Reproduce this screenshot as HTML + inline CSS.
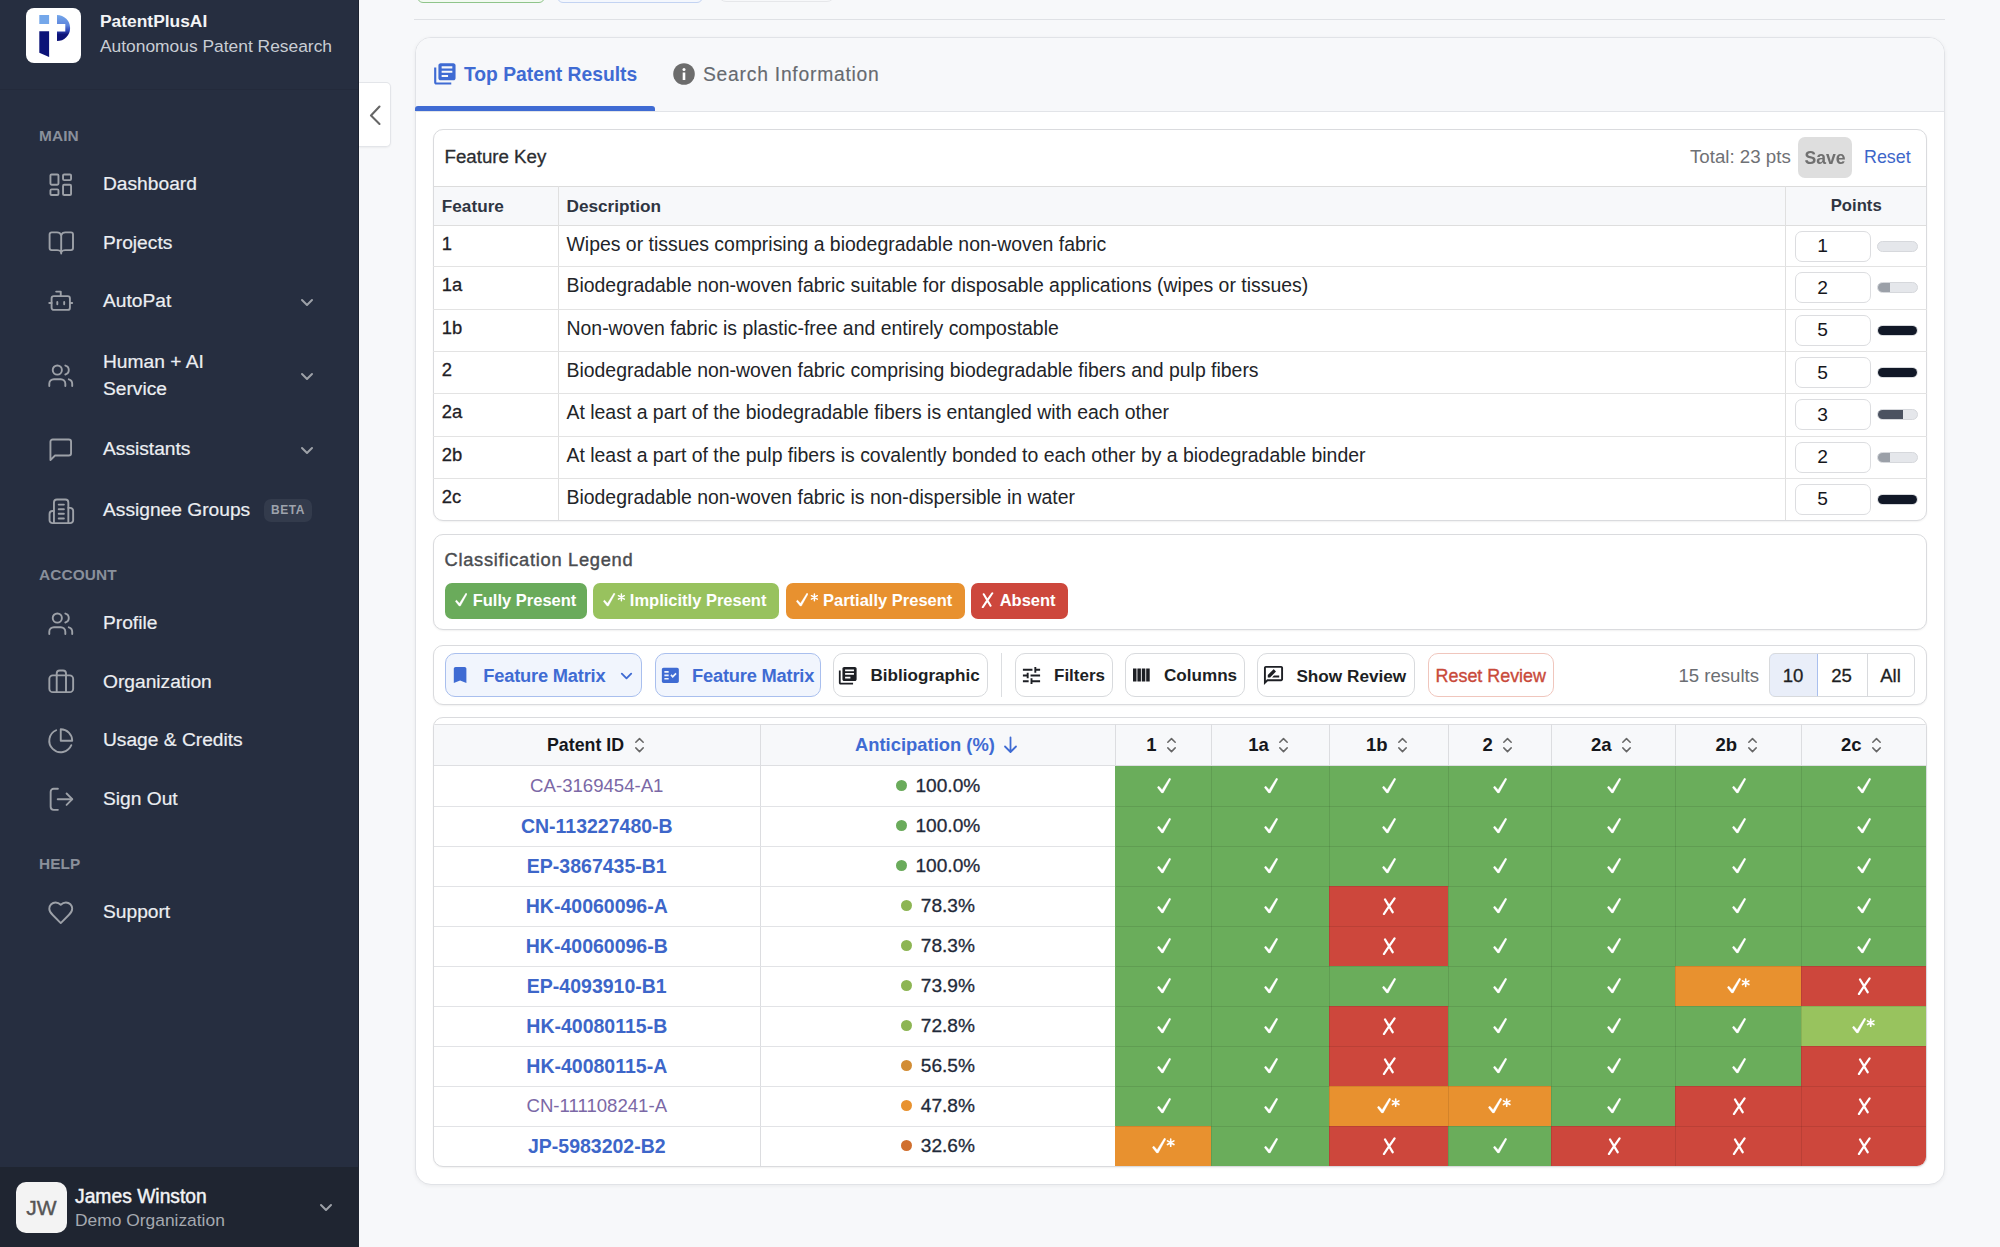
<!DOCTYPE html>
<html><head><meta charset="utf-8">
<style>
*{box-sizing:border-box;margin:0;padding:0}
html,body{width:2000px;height:1247px;overflow:hidden;background:#f7f8fa;font-family:"Liberation Sans",sans-serif;}
.abs{position:absolute}
.t{position:absolute;white-space:nowrap}
.box{position:absolute;border:1px solid #dadbde;border-radius:10px;background:#fff;box-shadow:0 1px 2px rgba(0,0,0,0.06)}
#sb{position:absolute;left:0;top:0;width:358.5px;height:1247px;background:#262e40;box-shadow:inset -1px 0 0 #1d2331}
.sbt{position:absolute;white-space:nowrap;color:#eceef2;font-size:19.2px;line-height:24px;-webkit-text-stroke:0.2px #eceef2}
.sec{position:absolute;white-space:nowrap;color:#8a909b;font-size:15.4px;font-weight:bold;line-height:20px;letter-spacing:0.1px}
.ic{position:absolute;width:27.5px;height:27.5px;fill:none;stroke:#9da1a8;stroke-width:1.65;stroke-linecap:round;stroke-linejoin:round}
.ic2{position:absolute;width:28px;height:28px;fill:none;stroke:#9da1a8;stroke-width:1.9;stroke-linecap:round;stroke-linejoin:round}
.chev{position:absolute;width:16px;height:16px;fill:none;stroke:#9da1a8;stroke-width:2;stroke-linecap:round;stroke-linejoin:round}
</style></head><body>
<div id="sb">
  <!-- logo -->
  <div class="abs" style="left:26px;top:8px;width:55px;height:55px;background:#fff;border-radius:8px"></div>
  <svg class="abs" style="left:26px;top:8px" width="55" height="55" viewBox="0 0 55 55">
    <defs><linearGradient id="lg" x1="0" y1="0" x2="0" y2="1"><stop offset="0" stop-color="#74a7ea"/><stop offset="0.4" stop-color="#5e84dc"/><stop offset="0.6" stop-color="#3047b8"/><stop offset="0.75" stop-color="#0e147a"/><stop offset="1" stop-color="#0c1278"/></linearGradient></defs>
    <rect x="13.3" y="7" width="9.8" height="9" fill="#74a7ea"/>
    <path d="M13.3 23.3 H23.1 V48.9 L13.3 44.8 Z" fill="#0c1378"/>
    <path d="M31 6.9 A13 13 0 0 1 31 33.1 V23.5 H39.3 V16 H31 Z" fill="url(#lg)"/>
  </svg>
  <div class="abs" style="left:100px;top:9px;color:#f3f4f6;font-size:17.4px;font-weight:bold;line-height:24px;white-space:nowrap">PatentPlusAI</div>
  <div class="abs" style="left:100px;top:34px;color:#c9cdd4;font-size:17.4px;line-height:24px;white-space:nowrap">Autonomous Patent Research</div>
  <div class="abs" style="left:0;top:88.5px;width:358px;height:1px;background:#232a3b"></div>

  <div class="sec" style="left:39px;top:126px">MAIN</div>

  <svg class="ic" style="left:47.25px;top:171.25px" viewBox="0 0 24 24"><rect x="3" y="3" width="7" height="9" rx="1"/><rect x="14" y="3" width="7" height="5" rx="1"/><rect x="14" y="12" width="7" height="9" rx="1"/><rect x="3" y="16" width="7" height="5" rx="1"/></svg>
  <div class="sbt" style="left:103px;top:172px">Dashboard</div>

  <svg class="ic2" style="left:47px;top:228px" viewBox="0 0 28 28"><path d="M14.2 25.6V7.2C13.5 5.3 12 4.4 10 4.4H4.6a2 2 0 0 0-2 2V20.1a2 2 0 0 0 2 2H10c2 0 3.5.6 4.2 2"/><path d="M14.2 7.2C14.9 5.3 16.4 4.4 18.4 4.4H24a2 2 0 0 1 2 2V20.1a2 2 0 0 1-2 2H18.4c-2 0-3.5.6-4.2 2"/></svg>
  <div class="sbt" style="left:103px;top:231px">Projects</div>

  <svg class="ic" style="left:47.25px;top:287.25px" viewBox="0 0 24 24"><path d="M12 8V4H8"/><rect width="16" height="12" x="4" y="8" rx="2"/><path d="M2 14h2"/><path d="M20 14h2"/><path d="M15 13v2"/><path d="M9 13v2"/></svg>
  <div class="sbt" style="left:103px;top:289px">AutoPat</div>
  <svg class="chev" style="left:299px;top:294px" viewBox="0 0 16 16"><path d="M3 6l5 5 5-5"/></svg>

  <svg class="ic" style="left:47.25px;top:362.25px" viewBox="0 0 24 24"><path d="M16 21v-2a4 4 0 0 0-4-4H6a4 4 0 0 0-4 4v2"/><circle cx="9" cy="7" r="4"/><path d="M22 21v-2a4 4 0 0 0-3-3.87"/><path d="M16 3.13a4 4 0 0 1 0 7.75"/></svg>
  <div class="sbt" style="left:103px;top:350px">Human + AI</div>
  <div class="sbt" style="left:103px;top:377px">Service</div>
  <svg class="chev" style="left:299px;top:368px" viewBox="0 0 16 16"><path d="M3 6l5 5 5-5"/></svg>

  <svg class="ic" style="left:47.25px;top:436.25px" viewBox="0 0 24 24"><path d="M21 15a2 2 0 0 1-2 2H7l-4 4V5a2 2 0 0 1 2-2h14a2 2 0 0 1 2 2z"/></svg>
  <div class="sbt" style="left:103px;top:437px">Assistants</div>
  <svg class="chev" style="left:299px;top:442px" viewBox="0 0 16 16"><path d="M3 6l5 5 5-5"/></svg>

  <svg class="ic2" style="left:47px;top:497px" viewBox="0 0 28 28"><path d="M6.95 26.15V5.55a3 3 0 0 1 3-3h8.4a3 3 0 0 1 3 3V26.15"/><path d="M6.95 14.05H5.55a3 3 0 0 0-3 3V23.15a3 3 0 0 0 3 3H23.15a3 3 0 0 0 3-3V13.85a3 3 0 0 0-3-3H21.35"/><path d="M11.7 7.6h5.2M11.7 12.2h5.2M11.7 16.7h5.2M11.7 21.5h5.2"/></svg>
  <div class="sbt" style="left:103px;top:498px">Assignee Groups</div>
  <div class="abs" style="left:264px;top:499px;width:48px;height:23px;border-radius:7px;background:#333b4c;color:#9ea3ac;font-size:12px;font-weight:bold;line-height:23px;text-align:center;letter-spacing:0.6px">BETA</div>

  <div class="sec" style="left:39px;top:565px">ACCOUNT</div>

  <svg class="ic" style="left:47.25px;top:610.25px" viewBox="0 0 24 24"><path d="M16 21v-2a4 4 0 0 0-4-4H6a4 4 0 0 0-4 4v2"/><circle cx="9" cy="7" r="4"/><path d="M22 21v-2a4 4 0 0 0-3-3.87"/><path d="M16 3.13a4 4 0 0 1 0 7.75"/></svg>
  <div class="sbt" style="left:103px;top:611px">Profile</div>

  <svg class="ic2" style="left:47px;top:666px" viewBox="0 0 28 28"><rect x="2.35" y="9.35" width="23.8" height="16.8" rx="3.5"/><path d="M9.7 9.35V7.55a3 3 0 0 1 3-3h3.3a3 3 0 0 1 3 3V9.35"/><path d="M9.7 9.35V26.15M19 9.35V26.15"/></svg>
  <div class="sbt" style="left:103px;top:670px">Organization</div>

  <svg class="ic" style="left:47.25px;top:727.25px" viewBox="0 0 24 24"><path d="M21.21 15.89A10 10 0 1 1 8 2.83"/><path d="M22 12A10 10 0 0 0 12 2v10z"/></svg>
  <div class="sbt" style="left:103px;top:728px">Usage &amp; Credits</div>

  <svg class="ic2" style="left:47px;top:786px" viewBox="0 0 28 28"><path d="M10.9 2.75H6.65A3 3 0 0 0 3.65 5.75V20.85A3 3 0 0 0 6.65 23.85H10.9"/><path d="M10.7 13.2H25"/><path d="M19.6 7.5L25.3 13.2L19.6 18.9"/></svg>
  <div class="sbt" style="left:103px;top:787px">Sign Out</div>

  <div class="sec" style="left:39px;top:854px">HELP</div>

  <svg class="ic" style="left:47.25px;top:899.25px" viewBox="0 0 24 24"><path d="M19 14c1.49-1.46 3-3.21 3-5.5A5.5 5.5 0 0 0 16.5 3c-1.76 0-3 .5-4.5 2-1.5-1.5-2.74-2-4.5-2A5.5 5.5 0 0 0 2 8.5c0 2.3 1.5 4.05 3 5.5l7 7Z"/></svg>
  <div class="sbt" style="left:103px;top:900px">Support</div>

  <!-- footer -->
  <div class="abs" style="left:0;top:1167px;width:358.5px;height:80px;background:#1f2531"></div>
  <div class="abs" style="left:16px;top:1182px;width:51px;height:51px;border-radius:10px;background:#f3f3f3;color:#555;font-size:21px;line-height:51px;text-align:center;-webkit-text-stroke:0.4px #555">JW</div>
  <div class="abs" style="left:75px;top:1184.5px;color:#f3f4f6;font-size:19.3px;line-height:24px;white-space:nowrap;-webkit-text-stroke:0.45px #f3f4f6">James Winston</div>
  <div class="abs" style="left:75px;top:1208px;color:#a5a9b0;font-size:17.4px;line-height:24px;white-space:nowrap">Demo Organization</div>
  <svg class="chev" style="left:318px;top:1199px" viewBox="0 0 16 16"><path d="M3 6l5 5 5-5"/></svg>
</div>

<!-- collapse button -->
<div class="abs" style="left:358.5px;top:81.8px;width:32px;height:65.7px;background:#fff;border:1px solid #e3e5e9;border-left:none;border-radius:0 5px 5px 0;box-shadow:0 1px 2px rgba(0,0,0,0.05)"></div>
<svg class="abs" style="left:364px;top:103px" width="22" height="24" viewBox="0 0 22 24"><path d="M15.5 3.5L7 12.5l8.5 8.5" fill="none" stroke="#666" stroke-width="2.1" stroke-linecap="round" stroke-linejoin="round"/></svg>


<!-- MAIN -->
<div class="abs" style="left:416.5px;top:-40px;width:128px;height:42.5px;border:1.5px solid #8fc48a;border-radius:6px;background:#f3faf2"></div>
<div class="abs" style="left:557px;top:-40px;width:146px;height:42.5px;border:1.5px solid #c3d3f2;border-radius:6px;background:#f4f7fd"></div>
<div class="abs" style="left:718px;top:-40px;width:117px;height:42px;border:1px solid #e6e7ea;border-radius:8px;background:#f7f8fa"></div>
<div class="abs" style="left:414px;top:19px;width:1531px;height:1px;background:#dfe1e5"></div>

<div id="card" class="abs" style="left:414.5px;top:37px;width:1530px;height:1148px;background:#fff;border:1px solid #e1e3e7;border-radius:16px;box-shadow:0 1px 4px rgba(0,0,0,0.06);overflow:hidden">
  <div class="abs" style="left:0;top:0;width:1530px;height:74px;background:#f7f8fa;border-bottom:1px solid #e2e4e8"></div>
</div>
<div class="abs" style="left:415px;top:106px;width:240px;height:4.5px;background:#3f6bd3;border-radius:3px 3px 0 0"></div>
<svg class="abs" style="left:431.9px;top:61.1px" width="25.7" height="25.7" viewBox="0 0 24 24"><path fill="#3f6bd3" d="M4 6H2v14c0 1.1.9 2 2 2h14v-2H4V6zm16-4H8c-1.1 0-2 .9-2 2v12c0 1.1.9 2 2 2h12c1.1 0 2-.9 2-2V4c0-1.1-.9-2-2-2zm-1 9H9V9h10v2zm-4 4H9v-2h6v2zm4-8H9V5h10v2z"/></svg>
<div class="t" style="left:464px;top:63px;font-size:19.3px;font-weight:bold;color:#3f6bd3;line-height:24px">Top Patent Results</div>
<svg class="abs" style="left:672.5px;top:63px" width="22" height="22" viewBox="0 0 22 22"><circle cx="11" cy="11" r="10.8" fill="#6c6c6c"/><rect x="9.7" y="9.5" width="2.6" height="7.5" fill="#fff"/><circle cx="11" cy="6.6" r="1.5" fill="#fff"/></svg>
<div class="t" style="left:703px;top:62.5px;font-size:19.3px;letter-spacing:0.76px;color:#666a70;line-height:24px;-webkit-text-stroke:0.15px #666a70">Search Information</div>

<!-- feature key -->
<div class="box" style="left:432.5px;top:128.5px;width:1494.5px;height:392px;"></div>
<div class="t" style="left:444.5px;top:144.5px;font-size:18.7px;color:#2b2d31;line-height:24px;-webkit-text-stroke:0.3px #2b2d31">Feature Key</div>
<div class="t" style="left:1690px;top:144.5px;font-size:18.7px;color:#6f7175;line-height:24px">Total: 23 pts</div>
<div class="abs" style="left:1797.5px;top:137px;width:54.5px;height:41px;border-radius:7px;background:#dedede"></div>
<div class="t" style="left:1804.5px;top:145.5px;font-size:17.6px;font-weight:bold;color:#707070;line-height:24px;filter:blur(0.4px)">Save</div>
<div class="t" style="left:1864px;top:145px;font-size:17.9px;color:#3d66c9;line-height:24px">Reset</div>
<div class="abs" style="left:433.5px;top:185.5px;width:1492.5px;height:40px;background:#f7f8fa;border-top:1.5px solid #dcdcdc;border-bottom:1px solid #dedede"></div>
<div class="t" style="left:441.8px;top:194px;font-size:17.2px;font-weight:bold;color:#2f3542;line-height:24px">Feature</div>
<div class="t" style="left:566.5px;top:194px;font-size:17.2px;font-weight:bold;color:#2f3542;line-height:24px">Description</div>
<div class="t" style="left:1785.7px;top:194px;width:141px;text-align:center;font-size:16.7px;font-weight:bold;color:#2f3542;line-height:24px">Points</div>
<div class="abs" style="left:557.8px;top:186px;width:1px;height:334px;background:#e0e0e0"></div>
<div class="abs" style="left:1785.2px;top:186px;width:1px;height:334px;background:#e0e0e0"></div>
<div class="abs" style="left:433px;top:266.2px;width:1493.5px;height:1px;background:#e3e3e3"></div>
<div class="t" style="left:441.8px;top:231.6px;font-size:18.4px;color:#1f2126;line-height:24px;-webkit-text-stroke:0.3px #1f2126">1</div>
<div class="t" style="left:566.5px;top:231.6px;font-size:19.43px;color:#222428;line-height:24px">Wipes or tissues comprising a biodegradable non-woven fabric</div>
<div class="abs" style="left:1794.5px;top:230.6px;width:76px;height:31px;border:1px solid #dcdde0;border-radius:7px;background:#fff"></div>
<div class="t" style="left:1794.5px;top:234.1px;width:56px;text-align:center;font-size:19.2px;color:#15171c;line-height:24px">1</div>
<div class="abs" style="left:1877px;top:240.6px;width:41px;height:11px;border-radius:6px;background:#e5e7eb;border:0.5px solid #d6d8dc;overflow:hidden"><div style="width:0%;height:100%;background:#9ba0a8"></div></div>
<div class="abs" style="left:433px;top:308.5px;width:1493.5px;height:1px;background:#e3e3e3"></div>
<div class="t" style="left:441.8px;top:273.4px;font-size:18.4px;color:#1f2126;line-height:24px;-webkit-text-stroke:0.3px #1f2126">1a</div>
<div class="t" style="left:566.5px;top:273.4px;font-size:19.43px;color:#222428;line-height:24px">Biodegradable non-woven fabric suitable for disposable applications (wipes or tissues)</div>
<div class="abs" style="left:1794.5px;top:272.4px;width:76px;height:31px;border:1px solid #dcdde0;border-radius:7px;background:#fff"></div>
<div class="t" style="left:1794.5px;top:275.9px;width:56px;text-align:center;font-size:19.2px;color:#15171c;line-height:24px">2</div>
<div class="abs" style="left:1877px;top:282.4px;width:41px;height:11px;border-radius:6px;background:#e5e7eb;border:0.5px solid #d6d8dc;overflow:hidden"><div style="width:32%;height:100%;background:#9ba0a8"></div></div>
<div class="abs" style="left:433px;top:350.9px;width:1493.5px;height:1px;background:#e3e3e3"></div>
<div class="t" style="left:441.8px;top:315.7px;font-size:18.4px;color:#1f2126;line-height:24px;-webkit-text-stroke:0.3px #1f2126">1b</div>
<div class="t" style="left:566.5px;top:315.7px;font-size:19.43px;color:#222428;line-height:24px">Non-woven fabric is plastic-free and entirely compostable</div>
<div class="abs" style="left:1794.5px;top:314.7px;width:76px;height:31px;border:1px solid #dcdde0;border-radius:7px;background:#fff"></div>
<div class="t" style="left:1794.5px;top:318.2px;width:56px;text-align:center;font-size:19.2px;color:#15171c;line-height:24px">5</div>
<div class="abs" style="left:1877px;top:324.7px;width:41px;height:11px;border-radius:6px;background:#e5e7eb;border:0.5px solid #d6d8dc;overflow:hidden"><div style="width:100%;height:100%;background:#111827"></div></div>
<div class="abs" style="left:433px;top:393.2px;width:1493.5px;height:1px;background:#e3e3e3"></div>
<div class="t" style="left:441.8px;top:358.0px;font-size:18.4px;color:#1f2126;line-height:24px;-webkit-text-stroke:0.3px #1f2126">2</div>
<div class="t" style="left:566.5px;top:358.0px;font-size:19.43px;color:#222428;line-height:24px">Biodegradable non-woven fabric comprising biodegradable fibers and pulp fibers</div>
<div class="abs" style="left:1794.5px;top:357.0px;width:76px;height:31px;border:1px solid #dcdde0;border-radius:7px;background:#fff"></div>
<div class="t" style="left:1794.5px;top:360.5px;width:56px;text-align:center;font-size:19.2px;color:#15171c;line-height:24px">5</div>
<div class="abs" style="left:1877px;top:367.0px;width:41px;height:11px;border-radius:6px;background:#e5e7eb;border:0.5px solid #d6d8dc;overflow:hidden"><div style="width:100%;height:100%;background:#111827"></div></div>
<div class="abs" style="left:433px;top:435.5px;width:1493.5px;height:1px;background:#e3e3e3"></div>
<div class="t" style="left:441.8px;top:400.4px;font-size:18.4px;color:#1f2126;line-height:24px;-webkit-text-stroke:0.3px #1f2126">2a</div>
<div class="t" style="left:566.5px;top:400.4px;font-size:19.43px;color:#222428;line-height:24px">At least a part of the biodegradable fibers is entangled with each other</div>
<div class="abs" style="left:1794.5px;top:399.4px;width:76px;height:31px;border:1px solid #dcdde0;border-radius:7px;background:#fff"></div>
<div class="t" style="left:1794.5px;top:402.9px;width:56px;text-align:center;font-size:19.2px;color:#15171c;line-height:24px">3</div>
<div class="abs" style="left:1877px;top:409.4px;width:41px;height:11px;border-radius:6px;background:#e5e7eb;border:0.5px solid #d6d8dc;overflow:hidden"><div style="width:64%;height:100%;background:#4b5260"></div></div>
<div class="abs" style="left:433px;top:477.5px;width:1493.5px;height:1px;background:#e3e3e3"></div>
<div class="t" style="left:441.8px;top:442.5px;font-size:18.4px;color:#1f2126;line-height:24px;-webkit-text-stroke:0.3px #1f2126">2b</div>
<div class="t" style="left:566.5px;top:442.5px;font-size:19.43px;color:#222428;line-height:24px">At least a part of the pulp fibers is covalently bonded to each other by a biodegradable binder</div>
<div class="abs" style="left:1794.5px;top:441.5px;width:76px;height:31px;border:1px solid #dcdde0;border-radius:7px;background:#fff"></div>
<div class="t" style="left:1794.5px;top:445.0px;width:56px;text-align:center;font-size:19.2px;color:#15171c;line-height:24px">2</div>
<div class="abs" style="left:1877px;top:451.5px;width:41px;height:11px;border-radius:6px;background:#e5e7eb;border:0.5px solid #d6d8dc;overflow:hidden"><div style="width:32%;height:100%;background:#9ba0a8"></div></div>
<div class="t" style="left:441.8px;top:484.7px;font-size:18.4px;color:#1f2126;line-height:24px;-webkit-text-stroke:0.3px #1f2126">2c</div>
<div class="t" style="left:566.5px;top:484.7px;font-size:19.43px;color:#222428;line-height:24px">Biodegradable non-woven fabric is non-dispersible in water</div>
<div class="abs" style="left:1794.5px;top:483.8px;width:76px;height:31px;border:1px solid #dcdde0;border-radius:7px;background:#fff"></div>
<div class="t" style="left:1794.5px;top:487.2px;width:56px;text-align:center;font-size:19.2px;color:#15171c;line-height:24px">5</div>
<div class="abs" style="left:1877px;top:493.8px;width:41px;height:11px;border-radius:6px;background:#e5e7eb;border:0.5px solid #d6d8dc;overflow:hidden"><div style="width:100%;height:100%;background:#111827"></div></div>
<!-- LEGEND_START -->
<div class="box" style="left:432.5px;top:534.3px;width:1494.5px;height:95.5px;"></div>
<div class="t" style="left:444.5px;top:547.8px;font-size:18.3px;letter-spacing:0.72px;color:#4a4c50;line-height:24px;-webkit-text-stroke:0.4px #4a4c50">Classification Legend</div>
<div class="abs" style="left:444.5px;top:583px;width:142.1px;height:35.6px;border-radius:7px;background:#6aab5b"></div>
<svg class="abs" style="left:455.2px;top:593px" width="12.3" height="14.1" viewBox="0 0 14 16"><path d="M0.3 9.4 L1.7 8.0 L5.1 11.7 L12.4 0.1 L13.9 0.9 L6.2 14.9 L4.6 14.9 Z" fill="#fff" stroke="#fff" stroke-width="0.3" stroke-linejoin="round"/></svg>
<div class="t" style="left:472.7px;top:588px;font-size:16.5px;font-weight:bold;color:#fff;line-height:24px">Fully Present</div>
<div class="abs" style="left:592.7px;top:583px;width:186.7px;height:35.6px;border-radius:7px;background:#98c25e"></div>
<svg class="abs" style="left:603.4000000000001px;top:593px" width="12.3" height="14.1" viewBox="0 0 14 16"><path d="M0.3 9.4 L1.7 8.0 L5.1 11.7 L12.4 0.1 L13.9 0.9 L6.2 14.9 L4.6 14.9 Z" fill="#fff" stroke="#fff" stroke-width="0.3" stroke-linejoin="round"/></svg>
<svg class="abs" style="left:616.7px;top:593.1px" width="8.8" height="8.8" viewBox="0 0 8.80 8.80"><path d="M4.40 1.00L4.40 7.80M1.46 2.70L7.34 6.10M7.34 2.70L1.46 6.10" stroke="#fff" stroke-width="1.5" stroke-linecap="round" fill="none"/></svg>
<div class="t" style="left:629.8px;top:588px;font-size:16.5px;font-weight:bold;color:#fff;line-height:24px">Implicitly Present</div>
<div class="abs" style="left:785.5px;top:583px;width:179.5px;height:35.6px;border-radius:7px;background:#e8912f"></div>
<svg class="abs" style="left:796.2px;top:593px" width="12.3" height="14.1" viewBox="0 0 14 16"><path d="M0.3 9.4 L1.7 8.0 L5.1 11.7 L12.4 0.1 L13.9 0.9 L6.2 14.9 L4.6 14.9 Z" fill="#fff" stroke="#fff" stroke-width="0.3" stroke-linejoin="round"/></svg>
<svg class="abs" style="left:809.5px;top:593.1px" width="8.8" height="8.8" viewBox="0 0 8.80 8.80"><path d="M4.40 1.00L4.40 7.80M1.46 2.70L7.34 6.10M7.34 2.70L1.46 6.10" stroke="#fff" stroke-width="1.5" stroke-linecap="round" fill="none"/></svg>
<div class="t" style="left:823px;top:588px;font-size:16.5px;font-weight:bold;color:#fff;line-height:24px">Partially Present</div>
<div class="abs" style="left:970.8px;top:583px;width:96.9px;height:35.6px;border-radius:7px;background:#cd473c"></div>
<svg class="abs" style="left:981.0999999999999px;top:592px" width="12.6" height="16.2" viewBox="0 0 14 18"><path d="M3.05 2.5 L10.65 15.2 M12.55 1.4 C9 6.5 5 12 1.95 17.0" fill="none" stroke="#fff" stroke-width="2.3" stroke-linecap="round" stroke-linejoin="round"/></svg>
<div class="t" style="left:999.7px;top:588px;font-size:16.5px;font-weight:bold;color:#fff;line-height:24px">Absent</div>
<div class="box" style="left:432.5px;top:645px;width:1494.5px;height:60.3px;"></div>
<div class="abs" style="left:444.8px;top:653.3px;width:197.6px;height:43.6px;border-radius:10px;background:#f1f5fd;border:1px solid #a9bfee"></div>
<svg class="abs" style="left:451.8px;top:666.1px" width="16.2" height="18" viewBox="3 2 18 20"><path fill="#3f6bd3" d="M17 3H7c-1.1 0-2 .9-2 2v16l7-3 7 3V5c0-1.1-.9-2-2-2z"/></svg>
<div class="t" style="left:483.3px;top:663.7px;font-size:18.3px;font-weight:bold;color:#3f6bd3;line-height:24px;letter-spacing:-0.2px">Feature Matrix</div>
<svg class="abs" style="left:619px;top:668px" width="15" height="15" viewBox="0 0 16 16"><path d="M3 6l5 5 5-5" fill="none" stroke="#3f6bd3" stroke-width="2" stroke-linecap="round" stroke-linejoin="round"/></svg>
<div class="abs" style="left:654.5px;top:653.3px;width:166.1px;height:43.6px;border-radius:10px;background:#f1f5fd;border:1px solid #a9bfee"></div>
<svg class="abs" style="left:660.9px;top:665.9px" width="18.7" height="18.7" viewBox="1 1 22 22"><path fill="#3f6bd3" d="M20 3H4c-1.1 0-2 .9-2 2v14c0 1.1.9 2 2 2h16c1.1 0 2-.9 2-2V5c0-1.1-.9-2-2-2zM10 17H5v-2h5v2zm0-4H5v-2h5v2zm0-4H5V7h5v2zm4.82 6L12 12.16l1.41-1.41 1.41 1.42L17.99 9l1.42 1.42L14.82 15z"/></svg>
<div class="t" style="left:692px;top:663.7px;font-size:18.3px;font-weight:bold;color:#3f6bd3;line-height:24px;letter-spacing:-0.2px">Feature Matrix</div>
<div class="abs" style="left:833.4px;top:653.3px;width:154.4px;height:43.6px;border-radius:10px;background:#fff;border:1px solid #d8dadd"></div>
<svg class="abs" style="left:838.4px;top:665.6px" width="19.5" height="19.5" viewBox="1 1 22 22"><path fill="#1d1f24" d="M4 6H2v14c0 1.1.9 2 2 2h14v-2H4V6zm16-4H8c-1.1 0-2 .9-2 2v12c0 1.1.9 2 2 2h12c1.1 0 2-.9 2-2V4c0-1.1-.9-2-2-2zm-1 9H9V9h10v2zm-4 4H9v-2h6v2zm4-8H9V5h10v2z"/></svg>
<div class="t" style="left:870.5px;top:663.7px;font-size:17.1px;font-weight:bold;color:#1d1f24;line-height:24px">Bibliographic</div>
<div class="abs" style="left:1001px;top:653px;width:1px;height:44px;background:#dcdee1"></div>
<div class="abs" style="left:1015px;top:653.3px;width:98.0px;height:43.6px;border-radius:10px;background:#fff;border:1px solid #d8dadd"></div>
<svg class="abs" style="left:1021px;top:665px" width="21" height="21" viewBox="1 1 22 22"><path fill="#1d1f24" d="M3 17v2h6v-2H3zM3 5v2h10V5H3zm10 16v-2h8v-2h-8v-2h-2v6h2zM7 9v2H3v2h4v2h2V9H7zm14 4v-2H11v2h10zm-6-4h2V7h4V5h-4V3h-2v6z"/></svg>
<div class="t" style="left:1054px;top:663.7px;font-size:17px;font-weight:bold;color:#1d1f24;line-height:24px">Filters</div>
<div class="abs" style="left:1125.4px;top:653.3px;width:120.0px;height:43.6px;border-radius:10px;background:#fff;border:1px solid #d8dadd"></div>
<svg class="abs" style="left:1133px;top:667px" width="17" height="16" viewBox="0 0 17 16"><rect x="0" y="1.5" width="3.5" height="13" fill="#1d1f24"/><rect x="4.4" y="1.5" width="3.5" height="13" fill="#1d1f24"/><rect x="8.8" y="1.5" width="3.5" height="13" fill="#1d1f24"/><rect x="13.2" y="1.5" width="3.5" height="13" fill="#1d1f24"/></svg>
<div class="t" style="left:1164px;top:663.7px;font-size:17.1px;font-weight:bold;color:#1d1f24;line-height:24px">Columns</div>
<div class="abs" style="left:1257.4px;top:653.3px;width:157.2px;height:43.6px;border-radius:10px;background:#fff;border:1px solid #d8dadd"></div>
<svg class="abs" style="left:1263px;top:665px" width="21" height="21" viewBox="1 1 22 22"><path fill="#1d1f24" d="M20 2H4c-1.1 0-1.99.9-1.99 2L2 22l4-4h14c1.1 0 2-.9 2-2V4c0-1.1-.9-2-2-2zm0 14H5.17l-.59.59-.58.58V4h16v12zm-9.5-2H18v-2h-5.5zm3.86-5.87c.2-.2.2-.51 0-.71l-1.77-1.77c-.2-.2-.51-.2-.71 0L6 11.53V14h2.47l5.89-5.87z"/></svg>
<div class="t" style="left:1296.4px;top:663.7px;font-size:17.2px;font-weight:bold;color:#1d1f24;line-height:24px">Show Review</div>
<div class="abs" style="left:1427.5px;top:653.3px;width:126.9px;height:43.6px;border-radius:10px;background:#fff;border:1px solid #f0c6bd"></div>
<div class="t" style="left:1435.6px;top:663.7px;font-size:17.9px;color:#c94a3a;line-height:24px;-webkit-text-stroke:0.35px #c94a3a">Reset Review</div>
<div class="t" style="left:1678.4px;top:663.7px;font-size:18.6px;color:#6b6e73;line-height:24px">15 results</div>
<div class="abs" style="left:1768.6px;top:653.3px;width:146.4px;height:43.6px;border-radius:6px;border:1px solid #d8dadd;background:#fff;overflow:hidden"><div class="abs" style="left:-1px;top:-1px;width:49.4px;height:43.6px;background:#e9eef9;border:1px solid #a9bfee;border-radius:6px 0 0 6px"></div><div class="abs" style="left:97.4px;top:0;width:1px;height:43px;background:#d8dadd"></div></div>
<div class="t" style="left:1768.6px;top:663.7px;width:49px;text-align:center;font-size:18.6px;color:#1d1f24;line-height:24px;-webkit-text-stroke:0.3px #1d1f24">10</div>
<div class="t" style="left:1817px;top:663.7px;width:49px;text-align:center;font-size:18.6px;color:#1d1f24;line-height:24px;-webkit-text-stroke:0.3px #1d1f24">25</div>
<div class="t" style="left:1866px;top:663.7px;width:49px;text-align:center;font-size:18.6px;color:#1d1f24;line-height:24px;-webkit-text-stroke:0.3px #1d1f24">All</div>
<div class="box" style="left:432.5px;top:717.4px;width:1494px;height:449.5px;border-radius:10px;overflow:hidden"></div>
<div class="abs" style="left:433.5px;top:718.4px;width:1492px;height:447.5px;border-radius:9px;overflow:hidden"><div class="abs" style="left:-433.5px;top:-718.4px;width:2000px;height:1247px">
<div class="abs" style="left:433.5px;top:724px;width:1492px;height:42.3px;background:#f7f8fa;border-top:1px solid #dedfe2;border-bottom:1px solid #dedfe2"></div>
<div class="abs" style="left:433.2px;top:732.6px;width:325.2px;height:24px;display:flex;justify-content:center;align-items:center;white-space:nowrap"><span style="font-size:17.8px;font-weight:bold;color:#15171c;line-height:24px">Patent ID</span><svg width="11" height="18" viewBox="0 0 11 18" style="margin-left:9.5px;flex:none"><path d="M1.8 6.3L5.5 2.6L9.2 6.3M1.8 11.9L5.5 15.6L9.2 11.9" fill="none" stroke="#666" stroke-width="1.5" stroke-linecap="round" stroke-linejoin="round"/></svg></div>
<div class="abs" style="left:760.4px;top:732.6px;width:353.1px;height:24px;display:flex;justify-content:center;align-items:center;white-space:nowrap"><span style="font-size:18.4px;font-weight:bold;color:#3f6bd3;line-height:24px">Anticipation (%)</span><svg width="17" height="19" viewBox="0 0 17 19" style="margin-left:7px;flex:none"><path d="M8.5 2.5v14M3 11.5l5.5 5.5 5.5-5.5" fill="none" stroke="#3f6bd3" stroke-width="1.8" stroke-linecap="round" stroke-linejoin="round"/></svg></div>
<div class="abs" style="left:1115.5px;top:732.6px;width:92.4px;height:24px;display:flex;justify-content:center;align-items:center;white-space:nowrap"><span style="font-size:18.5px;font-weight:bold;color:#15171c;line-height:24px">1</span><svg width="11" height="18" viewBox="0 0 11 18" style="margin-left:9.5px;flex:none"><path d="M1.8 6.3L5.5 2.6L9.2 6.3M1.8 11.9L5.5 15.6L9.2 11.9" fill="none" stroke="#666" stroke-width="1.5" stroke-linecap="round" stroke-linejoin="round"/></svg></div>
<div class="abs" style="left:1211.9px;top:732.6px;width:113.6px;height:24px;display:flex;justify-content:center;align-items:center;white-space:nowrap"><span style="font-size:18.5px;font-weight:bold;color:#15171c;line-height:24px">1a</span><svg width="11" height="18" viewBox="0 0 11 18" style="margin-left:9.5px;flex:none"><path d="M1.8 6.3L5.5 2.6L9.2 6.3M1.8 11.9L5.5 15.6L9.2 11.9" fill="none" stroke="#666" stroke-width="1.5" stroke-linecap="round" stroke-linejoin="round"/></svg></div>
<div class="abs" style="left:1329.5px;top:732.6px;width:115.0px;height:24px;display:flex;justify-content:center;align-items:center;white-space:nowrap"><span style="font-size:18.5px;font-weight:bold;color:#15171c;line-height:24px">1b</span><svg width="11" height="18" viewBox="0 0 11 18" style="margin-left:9.5px;flex:none"><path d="M1.8 6.3L5.5 2.6L9.2 6.3M1.8 11.9L5.5 15.6L9.2 11.9" fill="none" stroke="#666" stroke-width="1.5" stroke-linecap="round" stroke-linejoin="round"/></svg></div>
<div class="abs" style="left:1448.5px;top:732.6px;width:98.8px;height:24px;display:flex;justify-content:center;align-items:center;white-space:nowrap"><span style="font-size:18.5px;font-weight:bold;color:#15171c;line-height:24px">2</span><svg width="11" height="18" viewBox="0 0 11 18" style="margin-left:9.5px;flex:none"><path d="M1.8 6.3L5.5 2.6L9.2 6.3M1.8 11.9L5.5 15.6L9.2 11.9" fill="none" stroke="#666" stroke-width="1.5" stroke-linecap="round" stroke-linejoin="round"/></svg></div>
<div class="abs" style="left:1551.3px;top:732.6px;width:120.6px;height:24px;display:flex;justify-content:center;align-items:center;white-space:nowrap"><span style="font-size:18.5px;font-weight:bold;color:#15171c;line-height:24px">2a</span><svg width="11" height="18" viewBox="0 0 11 18" style="margin-left:9.5px;flex:none"><path d="M1.8 6.3L5.5 2.6L9.2 6.3M1.8 11.9L5.5 15.6L9.2 11.9" fill="none" stroke="#666" stroke-width="1.5" stroke-linecap="round" stroke-linejoin="round"/></svg></div>
<div class="abs" style="left:1675.9px;top:732.6px;width:121.3px;height:24px;display:flex;justify-content:center;align-items:center;white-space:nowrap"><span style="font-size:18.5px;font-weight:bold;color:#15171c;line-height:24px">2b</span><svg width="11" height="18" viewBox="0 0 11 18" style="margin-left:9.5px;flex:none"><path d="M1.8 6.3L5.5 2.6L9.2 6.3M1.8 11.9L5.5 15.6L9.2 11.9" fill="none" stroke="#666" stroke-width="1.5" stroke-linecap="round" stroke-linejoin="round"/></svg></div>
<div class="abs" style="left:1801.2px;top:732.6px;width:120.7px;height:24px;display:flex;justify-content:center;align-items:center;white-space:nowrap"><span style="font-size:18.5px;font-weight:bold;color:#15171c;line-height:24px">2c</span><svg width="11" height="18" viewBox="0 0 11 18" style="margin-left:9.5px;flex:none"><path d="M1.8 6.3L5.5 2.6L9.2 6.3M1.8 11.9L5.5 15.6L9.2 11.9" fill="none" stroke="#666" stroke-width="1.5" stroke-linecap="round" stroke-linejoin="round"/></svg></div>
<div class="abs" style="left:759.9px;top:724px;width:1px;height:443px;background:#dcdde0"></div>
<div class="abs" style="left:1115.0px;top:724px;width:1px;height:443px;background:#dcdde0"></div>
<div class="abs" style="left:1211.4px;top:724px;width:1px;height:443px;background:#dcdde0"></div>
<div class="abs" style="left:1329.0px;top:724px;width:1px;height:443px;background:#dcdde0"></div>
<div class="abs" style="left:1448.0px;top:724px;width:1px;height:443px;background:#dcdde0"></div>
<div class="abs" style="left:1550.8px;top:724px;width:1px;height:443px;background:#dcdde0"></div>
<div class="abs" style="left:1675.4px;top:724px;width:1px;height:443px;background:#dcdde0"></div>
<div class="abs" style="left:1800.7px;top:724px;width:1px;height:443px;background:#dcdde0"></div>
<div class="abs" style="left:433.5px;top:805.8px;width:1492px;height:1px;background:#e2e3e6"></div>
<div class="t" style="left:433.2px;top:774.3px;width:327.2px;text-align:center;font-size:18.6px;color:#7b68a6;line-height:24px">CA-3169454-A1</div>
<div class="t" style="left:760.4px;top:774.3px;width:355px;text-align:center;font-size:19.1px;color:#1f2a3a;line-height:24px;-webkit-text-stroke:0.3px #1f2a3a"><span style="display:inline-block;width:11px;height:11px;border-radius:50%;background:#6aab5b;margin-right:9px;vertical-align:1px"></span>100.0%</div>
<div class="abs" style="left:1115.0px;top:765.8px;width:97.4px;height:41.0px;background:#6aad5b"></div>
<svg class="abs" style="left:1156.7px;top:778.3px" width="14.0" height="16.0" viewBox="0 0 14 16"><path d="M0.3 9.4 L1.7 8.0 L5.1 11.7 L12.4 0.1 L13.9 0.9 L6.2 14.9 L4.6 14.9 Z" fill="#fff" stroke="#fff" stroke-width="0.3" stroke-linejoin="round"/></svg>
<div class="abs" style="left:1211.4px;top:765.8px;width:118.6px;height:41.0px;background:#6aad5b"></div>
<svg class="abs" style="left:1263.7px;top:778.3px" width="14.0" height="16.0" viewBox="0 0 14 16"><path d="M0.3 9.4 L1.7 8.0 L5.1 11.7 L12.4 0.1 L13.9 0.9 L6.2 14.9 L4.6 14.9 Z" fill="#fff" stroke="#fff" stroke-width="0.3" stroke-linejoin="round"/></svg>
<div class="abs" style="left:1329.0px;top:765.8px;width:120.0px;height:41.0px;background:#6aad5b"></div>
<svg class="abs" style="left:1382.0px;top:778.3px" width="14.0" height="16.0" viewBox="0 0 14 16"><path d="M0.3 9.4 L1.7 8.0 L5.1 11.7 L12.4 0.1 L13.9 0.9 L6.2 14.9 L4.6 14.9 Z" fill="#fff" stroke="#fff" stroke-width="0.3" stroke-linejoin="round"/></svg>
<div class="abs" style="left:1448.0px;top:765.8px;width:103.8px;height:41.0px;background:#6aad5b"></div>
<svg class="abs" style="left:1492.9px;top:778.3px" width="14.0" height="16.0" viewBox="0 0 14 16"><path d="M0.3 9.4 L1.7 8.0 L5.1 11.7 L12.4 0.1 L13.9 0.9 L6.2 14.9 L4.6 14.9 Z" fill="#fff" stroke="#fff" stroke-width="0.3" stroke-linejoin="round"/></svg>
<div class="abs" style="left:1550.8px;top:765.8px;width:125.6px;height:41.0px;background:#6aad5b"></div>
<svg class="abs" style="left:1606.6px;top:778.3px" width="14.0" height="16.0" viewBox="0 0 14 16"><path d="M0.3 9.4 L1.7 8.0 L5.1 11.7 L12.4 0.1 L13.9 0.9 L6.2 14.9 L4.6 14.9 Z" fill="#fff" stroke="#fff" stroke-width="0.3" stroke-linejoin="round"/></svg>
<div class="abs" style="left:1675.4px;top:765.8px;width:126.3px;height:41.0px;background:#6aad5b"></div>
<svg class="abs" style="left:1731.5500000000002px;top:778.3px" width="14.0" height="16.0" viewBox="0 0 14 16"><path d="M0.3 9.4 L1.7 8.0 L5.1 11.7 L12.4 0.1 L13.9 0.9 L6.2 14.9 L4.6 14.9 Z" fill="#fff" stroke="#fff" stroke-width="0.3" stroke-linejoin="round"/></svg>
<div class="abs" style="left:1800.7px;top:765.8px;width:125.7px;height:41.0px;background:#6aad5b"></div>
<svg class="abs" style="left:1856.5500000000002px;top:778.3px" width="14.0" height="16.0" viewBox="0 0 14 16"><path d="M0.3 9.4 L1.7 8.0 L5.1 11.7 L12.4 0.1 L13.9 0.9 L6.2 14.9 L4.6 14.9 Z" fill="#fff" stroke="#fff" stroke-width="0.3" stroke-linejoin="round"/></svg>
<div class="abs" style="left:433.5px;top:845.8px;width:1492px;height:1px;background:#e2e3e6"></div>
<div class="t" style="left:433.2px;top:814.3px;width:327.2px;text-align:center;font-size:19.5px;font-weight:bold;color:#3d66c9;line-height:24px">CN-113227480-B</div>
<div class="t" style="left:760.4px;top:814.3px;width:355px;text-align:center;font-size:19.1px;color:#1f2a3a;line-height:24px;-webkit-text-stroke:0.3px #1f2a3a"><span style="display:inline-block;width:11px;height:11px;border-radius:50%;background:#6aab5b;margin-right:9px;vertical-align:1px"></span>100.0%</div>
<div class="abs" style="left:1115.0px;top:805.8px;width:97.4px;height:41.0px;background:#6aad5b"></div>
<svg class="abs" style="left:1156.7px;top:818.3px" width="14.0" height="16.0" viewBox="0 0 14 16"><path d="M0.3 9.4 L1.7 8.0 L5.1 11.7 L12.4 0.1 L13.9 0.9 L6.2 14.9 L4.6 14.9 Z" fill="#fff" stroke="#fff" stroke-width="0.3" stroke-linejoin="round"/></svg>
<div class="abs" style="left:1211.4px;top:805.8px;width:118.6px;height:41.0px;background:#6aad5b"></div>
<svg class="abs" style="left:1263.7px;top:818.3px" width="14.0" height="16.0" viewBox="0 0 14 16"><path d="M0.3 9.4 L1.7 8.0 L5.1 11.7 L12.4 0.1 L13.9 0.9 L6.2 14.9 L4.6 14.9 Z" fill="#fff" stroke="#fff" stroke-width="0.3" stroke-linejoin="round"/></svg>
<div class="abs" style="left:1329.0px;top:805.8px;width:120.0px;height:41.0px;background:#6aad5b"></div>
<svg class="abs" style="left:1382.0px;top:818.3px" width="14.0" height="16.0" viewBox="0 0 14 16"><path d="M0.3 9.4 L1.7 8.0 L5.1 11.7 L12.4 0.1 L13.9 0.9 L6.2 14.9 L4.6 14.9 Z" fill="#fff" stroke="#fff" stroke-width="0.3" stroke-linejoin="round"/></svg>
<div class="abs" style="left:1448.0px;top:805.8px;width:103.8px;height:41.0px;background:#6aad5b"></div>
<svg class="abs" style="left:1492.9px;top:818.3px" width="14.0" height="16.0" viewBox="0 0 14 16"><path d="M0.3 9.4 L1.7 8.0 L5.1 11.7 L12.4 0.1 L13.9 0.9 L6.2 14.9 L4.6 14.9 Z" fill="#fff" stroke="#fff" stroke-width="0.3" stroke-linejoin="round"/></svg>
<div class="abs" style="left:1550.8px;top:805.8px;width:125.6px;height:41.0px;background:#6aad5b"></div>
<svg class="abs" style="left:1606.6px;top:818.3px" width="14.0" height="16.0" viewBox="0 0 14 16"><path d="M0.3 9.4 L1.7 8.0 L5.1 11.7 L12.4 0.1 L13.9 0.9 L6.2 14.9 L4.6 14.9 Z" fill="#fff" stroke="#fff" stroke-width="0.3" stroke-linejoin="round"/></svg>
<div class="abs" style="left:1675.4px;top:805.8px;width:126.3px;height:41.0px;background:#6aad5b"></div>
<svg class="abs" style="left:1731.5500000000002px;top:818.3px" width="14.0" height="16.0" viewBox="0 0 14 16"><path d="M0.3 9.4 L1.7 8.0 L5.1 11.7 L12.4 0.1 L13.9 0.9 L6.2 14.9 L4.6 14.9 Z" fill="#fff" stroke="#fff" stroke-width="0.3" stroke-linejoin="round"/></svg>
<div class="abs" style="left:1800.7px;top:805.8px;width:125.7px;height:41.0px;background:#6aad5b"></div>
<svg class="abs" style="left:1856.5500000000002px;top:818.3px" width="14.0" height="16.0" viewBox="0 0 14 16"><path d="M0.3 9.4 L1.7 8.0 L5.1 11.7 L12.4 0.1 L13.9 0.9 L6.2 14.9 L4.6 14.9 Z" fill="#fff" stroke="#fff" stroke-width="0.3" stroke-linejoin="round"/></svg>
<div class="abs" style="left:433.5px;top:885.8px;width:1492px;height:1px;background:#e2e3e6"></div>
<div class="t" style="left:433.2px;top:854.3px;width:327.2px;text-align:center;font-size:19.5px;font-weight:bold;color:#3d66c9;line-height:24px">EP-3867435-B1</div>
<div class="t" style="left:760.4px;top:854.3px;width:355px;text-align:center;font-size:19.1px;color:#1f2a3a;line-height:24px;-webkit-text-stroke:0.3px #1f2a3a"><span style="display:inline-block;width:11px;height:11px;border-radius:50%;background:#6aab5b;margin-right:9px;vertical-align:1px"></span>100.0%</div>
<div class="abs" style="left:1115.0px;top:845.8px;width:97.4px;height:41.0px;background:#6aad5b"></div>
<svg class="abs" style="left:1156.7px;top:858.3px" width="14.0" height="16.0" viewBox="0 0 14 16"><path d="M0.3 9.4 L1.7 8.0 L5.1 11.7 L12.4 0.1 L13.9 0.9 L6.2 14.9 L4.6 14.9 Z" fill="#fff" stroke="#fff" stroke-width="0.3" stroke-linejoin="round"/></svg>
<div class="abs" style="left:1211.4px;top:845.8px;width:118.6px;height:41.0px;background:#6aad5b"></div>
<svg class="abs" style="left:1263.7px;top:858.3px" width="14.0" height="16.0" viewBox="0 0 14 16"><path d="M0.3 9.4 L1.7 8.0 L5.1 11.7 L12.4 0.1 L13.9 0.9 L6.2 14.9 L4.6 14.9 Z" fill="#fff" stroke="#fff" stroke-width="0.3" stroke-linejoin="round"/></svg>
<div class="abs" style="left:1329.0px;top:845.8px;width:120.0px;height:41.0px;background:#6aad5b"></div>
<svg class="abs" style="left:1382.0px;top:858.3px" width="14.0" height="16.0" viewBox="0 0 14 16"><path d="M0.3 9.4 L1.7 8.0 L5.1 11.7 L12.4 0.1 L13.9 0.9 L6.2 14.9 L4.6 14.9 Z" fill="#fff" stroke="#fff" stroke-width="0.3" stroke-linejoin="round"/></svg>
<div class="abs" style="left:1448.0px;top:845.8px;width:103.8px;height:41.0px;background:#6aad5b"></div>
<svg class="abs" style="left:1492.9px;top:858.3px" width="14.0" height="16.0" viewBox="0 0 14 16"><path d="M0.3 9.4 L1.7 8.0 L5.1 11.7 L12.4 0.1 L13.9 0.9 L6.2 14.9 L4.6 14.9 Z" fill="#fff" stroke="#fff" stroke-width="0.3" stroke-linejoin="round"/></svg>
<div class="abs" style="left:1550.8px;top:845.8px;width:125.6px;height:41.0px;background:#6aad5b"></div>
<svg class="abs" style="left:1606.6px;top:858.3px" width="14.0" height="16.0" viewBox="0 0 14 16"><path d="M0.3 9.4 L1.7 8.0 L5.1 11.7 L12.4 0.1 L13.9 0.9 L6.2 14.9 L4.6 14.9 Z" fill="#fff" stroke="#fff" stroke-width="0.3" stroke-linejoin="round"/></svg>
<div class="abs" style="left:1675.4px;top:845.8px;width:126.3px;height:41.0px;background:#6aad5b"></div>
<svg class="abs" style="left:1731.5500000000002px;top:858.3px" width="14.0" height="16.0" viewBox="0 0 14 16"><path d="M0.3 9.4 L1.7 8.0 L5.1 11.7 L12.4 0.1 L13.9 0.9 L6.2 14.9 L4.6 14.9 Z" fill="#fff" stroke="#fff" stroke-width="0.3" stroke-linejoin="round"/></svg>
<div class="abs" style="left:1800.7px;top:845.8px;width:125.7px;height:41.0px;background:#6aad5b"></div>
<svg class="abs" style="left:1856.5500000000002px;top:858.3px" width="14.0" height="16.0" viewBox="0 0 14 16"><path d="M0.3 9.4 L1.7 8.0 L5.1 11.7 L12.4 0.1 L13.9 0.9 L6.2 14.9 L4.6 14.9 Z" fill="#fff" stroke="#fff" stroke-width="0.3" stroke-linejoin="round"/></svg>
<div class="abs" style="left:433.5px;top:925.8px;width:1492px;height:1px;background:#e2e3e6"></div>
<div class="t" style="left:433.2px;top:894.3px;width:327.2px;text-align:center;font-size:19.5px;font-weight:bold;color:#3d66c9;line-height:24px">HK-40060096-A</div>
<div class="t" style="left:760.4px;top:894.3px;width:355px;text-align:center;font-size:19.1px;color:#1f2a3a;line-height:24px;-webkit-text-stroke:0.3px #1f2a3a"><span style="display:inline-block;width:11px;height:11px;border-radius:50%;background:#8db553;margin-right:9px;vertical-align:1px"></span>78.3%</div>
<div class="abs" style="left:1115.0px;top:885.8px;width:97.4px;height:41.0px;background:#6aad5b"></div>
<svg class="abs" style="left:1156.7px;top:898.3px" width="14.0" height="16.0" viewBox="0 0 14 16"><path d="M0.3 9.4 L1.7 8.0 L5.1 11.7 L12.4 0.1 L13.9 0.9 L6.2 14.9 L4.6 14.9 Z" fill="#fff" stroke="#fff" stroke-width="0.3" stroke-linejoin="round"/></svg>
<div class="abs" style="left:1211.4px;top:885.8px;width:118.6px;height:41.0px;background:#6aad5b"></div>
<svg class="abs" style="left:1263.7px;top:898.3px" width="14.0" height="16.0" viewBox="0 0 14 16"><path d="M0.3 9.4 L1.7 8.0 L5.1 11.7 L12.4 0.1 L13.9 0.9 L6.2 14.9 L4.6 14.9 Z" fill="#fff" stroke="#fff" stroke-width="0.3" stroke-linejoin="round"/></svg>
<div class="abs" style="left:1329.0px;top:885.8px;width:120.0px;height:41.0px;background:#cd473c"></div>
<svg class="abs" style="left:1382.0px;top:897.3px" width="14.0" height="18.0" viewBox="0 0 14 18"><path d="M3.05 2.5 L10.65 15.2 M12.55 1.4 C9 6.5 5 12 1.95 17.0" fill="none" stroke="#fff" stroke-width="2.3" stroke-linecap="round" stroke-linejoin="round"/></svg>
<div class="abs" style="left:1448.0px;top:885.8px;width:103.8px;height:41.0px;background:#6aad5b"></div>
<svg class="abs" style="left:1492.9px;top:898.3px" width="14.0" height="16.0" viewBox="0 0 14 16"><path d="M0.3 9.4 L1.7 8.0 L5.1 11.7 L12.4 0.1 L13.9 0.9 L6.2 14.9 L4.6 14.9 Z" fill="#fff" stroke="#fff" stroke-width="0.3" stroke-linejoin="round"/></svg>
<div class="abs" style="left:1550.8px;top:885.8px;width:125.6px;height:41.0px;background:#6aad5b"></div>
<svg class="abs" style="left:1606.6px;top:898.3px" width="14.0" height="16.0" viewBox="0 0 14 16"><path d="M0.3 9.4 L1.7 8.0 L5.1 11.7 L12.4 0.1 L13.9 0.9 L6.2 14.9 L4.6 14.9 Z" fill="#fff" stroke="#fff" stroke-width="0.3" stroke-linejoin="round"/></svg>
<div class="abs" style="left:1675.4px;top:885.8px;width:126.3px;height:41.0px;background:#6aad5b"></div>
<svg class="abs" style="left:1731.5500000000002px;top:898.3px" width="14.0" height="16.0" viewBox="0 0 14 16"><path d="M0.3 9.4 L1.7 8.0 L5.1 11.7 L12.4 0.1 L13.9 0.9 L6.2 14.9 L4.6 14.9 Z" fill="#fff" stroke="#fff" stroke-width="0.3" stroke-linejoin="round"/></svg>
<div class="abs" style="left:1800.7px;top:885.8px;width:125.7px;height:41.0px;background:#6aad5b"></div>
<svg class="abs" style="left:1856.5500000000002px;top:898.3px" width="14.0" height="16.0" viewBox="0 0 14 16"><path d="M0.3 9.4 L1.7 8.0 L5.1 11.7 L12.4 0.1 L13.9 0.9 L6.2 14.9 L4.6 14.9 Z" fill="#fff" stroke="#fff" stroke-width="0.3" stroke-linejoin="round"/></svg>
<div class="abs" style="left:433.5px;top:965.8px;width:1492px;height:1px;background:#e2e3e6"></div>
<div class="t" style="left:433.2px;top:934.3px;width:327.2px;text-align:center;font-size:19.5px;font-weight:bold;color:#3d66c9;line-height:24px">HK-40060096-B</div>
<div class="t" style="left:760.4px;top:934.3px;width:355px;text-align:center;font-size:19.1px;color:#1f2a3a;line-height:24px;-webkit-text-stroke:0.3px #1f2a3a"><span style="display:inline-block;width:11px;height:11px;border-radius:50%;background:#8db553;margin-right:9px;vertical-align:1px"></span>78.3%</div>
<div class="abs" style="left:1115.0px;top:925.8px;width:97.4px;height:41.0px;background:#6aad5b"></div>
<svg class="abs" style="left:1156.7px;top:938.3px" width="14.0" height="16.0" viewBox="0 0 14 16"><path d="M0.3 9.4 L1.7 8.0 L5.1 11.7 L12.4 0.1 L13.9 0.9 L6.2 14.9 L4.6 14.9 Z" fill="#fff" stroke="#fff" stroke-width="0.3" stroke-linejoin="round"/></svg>
<div class="abs" style="left:1211.4px;top:925.8px;width:118.6px;height:41.0px;background:#6aad5b"></div>
<svg class="abs" style="left:1263.7px;top:938.3px" width="14.0" height="16.0" viewBox="0 0 14 16"><path d="M0.3 9.4 L1.7 8.0 L5.1 11.7 L12.4 0.1 L13.9 0.9 L6.2 14.9 L4.6 14.9 Z" fill="#fff" stroke="#fff" stroke-width="0.3" stroke-linejoin="round"/></svg>
<div class="abs" style="left:1329.0px;top:925.8px;width:120.0px;height:41.0px;background:#cd473c"></div>
<svg class="abs" style="left:1382.0px;top:937.3px" width="14.0" height="18.0" viewBox="0 0 14 18"><path d="M3.05 2.5 L10.65 15.2 M12.55 1.4 C9 6.5 5 12 1.95 17.0" fill="none" stroke="#fff" stroke-width="2.3" stroke-linecap="round" stroke-linejoin="round"/></svg>
<div class="abs" style="left:1448.0px;top:925.8px;width:103.8px;height:41.0px;background:#6aad5b"></div>
<svg class="abs" style="left:1492.9px;top:938.3px" width="14.0" height="16.0" viewBox="0 0 14 16"><path d="M0.3 9.4 L1.7 8.0 L5.1 11.7 L12.4 0.1 L13.9 0.9 L6.2 14.9 L4.6 14.9 Z" fill="#fff" stroke="#fff" stroke-width="0.3" stroke-linejoin="round"/></svg>
<div class="abs" style="left:1550.8px;top:925.8px;width:125.6px;height:41.0px;background:#6aad5b"></div>
<svg class="abs" style="left:1606.6px;top:938.3px" width="14.0" height="16.0" viewBox="0 0 14 16"><path d="M0.3 9.4 L1.7 8.0 L5.1 11.7 L12.4 0.1 L13.9 0.9 L6.2 14.9 L4.6 14.9 Z" fill="#fff" stroke="#fff" stroke-width="0.3" stroke-linejoin="round"/></svg>
<div class="abs" style="left:1675.4px;top:925.8px;width:126.3px;height:41.0px;background:#6aad5b"></div>
<svg class="abs" style="left:1731.5500000000002px;top:938.3px" width="14.0" height="16.0" viewBox="0 0 14 16"><path d="M0.3 9.4 L1.7 8.0 L5.1 11.7 L12.4 0.1 L13.9 0.9 L6.2 14.9 L4.6 14.9 Z" fill="#fff" stroke="#fff" stroke-width="0.3" stroke-linejoin="round"/></svg>
<div class="abs" style="left:1800.7px;top:925.8px;width:125.7px;height:41.0px;background:#6aad5b"></div>
<svg class="abs" style="left:1856.5500000000002px;top:938.3px" width="14.0" height="16.0" viewBox="0 0 14 16"><path d="M0.3 9.4 L1.7 8.0 L5.1 11.7 L12.4 0.1 L13.9 0.9 L6.2 14.9 L4.6 14.9 Z" fill="#fff" stroke="#fff" stroke-width="0.3" stroke-linejoin="round"/></svg>
<div class="abs" style="left:433.5px;top:1005.8px;width:1492px;height:1px;background:#e2e3e6"></div>
<div class="t" style="left:433.2px;top:974.3px;width:327.2px;text-align:center;font-size:19.5px;font-weight:bold;color:#3d66c9;line-height:24px">EP-4093910-B1</div>
<div class="t" style="left:760.4px;top:974.3px;width:355px;text-align:center;font-size:19.1px;color:#1f2a3a;line-height:24px;-webkit-text-stroke:0.3px #1f2a3a"><span style="display:inline-block;width:11px;height:11px;border-radius:50%;background:#8db553;margin-right:9px;vertical-align:1px"></span>73.9%</div>
<div class="abs" style="left:1115.0px;top:965.8px;width:97.4px;height:41.0px;background:#6aad5b"></div>
<svg class="abs" style="left:1156.7px;top:978.3px" width="14.0" height="16.0" viewBox="0 0 14 16"><path d="M0.3 9.4 L1.7 8.0 L5.1 11.7 L12.4 0.1 L13.9 0.9 L6.2 14.9 L4.6 14.9 Z" fill="#fff" stroke="#fff" stroke-width="0.3" stroke-linejoin="round"/></svg>
<div class="abs" style="left:1211.4px;top:965.8px;width:118.6px;height:41.0px;background:#6aad5b"></div>
<svg class="abs" style="left:1263.7px;top:978.3px" width="14.0" height="16.0" viewBox="0 0 14 16"><path d="M0.3 9.4 L1.7 8.0 L5.1 11.7 L12.4 0.1 L13.9 0.9 L6.2 14.9 L4.6 14.9 Z" fill="#fff" stroke="#fff" stroke-width="0.3" stroke-linejoin="round"/></svg>
<div class="abs" style="left:1329.0px;top:965.8px;width:120.0px;height:41.0px;background:#6aad5b"></div>
<svg class="abs" style="left:1382.0px;top:978.3px" width="14.0" height="16.0" viewBox="0 0 14 16"><path d="M0.3 9.4 L1.7 8.0 L5.1 11.7 L12.4 0.1 L13.9 0.9 L6.2 14.9 L4.6 14.9 Z" fill="#fff" stroke="#fff" stroke-width="0.3" stroke-linejoin="round"/></svg>
<div class="abs" style="left:1448.0px;top:965.8px;width:103.8px;height:41.0px;background:#6aad5b"></div>
<svg class="abs" style="left:1492.9px;top:978.3px" width="14.0" height="16.0" viewBox="0 0 14 16"><path d="M0.3 9.4 L1.7 8.0 L5.1 11.7 L12.4 0.1 L13.9 0.9 L6.2 14.9 L4.6 14.9 Z" fill="#fff" stroke="#fff" stroke-width="0.3" stroke-linejoin="round"/></svg>
<div class="abs" style="left:1550.8px;top:965.8px;width:125.6px;height:41.0px;background:#6aad5b"></div>
<svg class="abs" style="left:1606.6px;top:978.3px" width="14.0" height="16.0" viewBox="0 0 14 16"><path d="M0.3 9.4 L1.7 8.0 L5.1 11.7 L12.4 0.1 L13.9 0.9 L6.2 14.9 L4.6 14.9 Z" fill="#fff" stroke="#fff" stroke-width="0.3" stroke-linejoin="round"/></svg>
<div class="abs" style="left:1675.4px;top:965.8px;width:126.3px;height:41.0px;background:#e8912f"></div>
<svg class="abs" style="left:1726.5500000000002px;top:978.3px" width="14.0" height="16.0" viewBox="0 0 14 16"><path d="M0.3 9.4 L1.7 8.0 L5.1 11.7 L12.4 0.1 L13.9 0.9 L6.2 14.9 L4.6 14.9 Z" fill="#fff" stroke="#fff" stroke-width="0.3" stroke-linejoin="round"/></svg>
<svg class="abs" style="left:1740.9px;top:978.2px" width="9.4" height="9.4" viewBox="0 0 9.40 9.40"><path d="M4.70 1.00L4.70 8.40M1.50 2.85L7.90 6.55M7.90 2.85L1.50 6.55" stroke="#fff" stroke-width="1.6" stroke-linecap="round" fill="none"/></svg>
<div class="abs" style="left:1800.7px;top:965.8px;width:125.7px;height:41.0px;background:#cd473c"></div>
<svg class="abs" style="left:1856.5500000000002px;top:977.3px" width="14.0" height="18.0" viewBox="0 0 14 18"><path d="M3.05 2.5 L10.65 15.2 M12.55 1.4 C9 6.5 5 12 1.95 17.0" fill="none" stroke="#fff" stroke-width="2.3" stroke-linecap="round" stroke-linejoin="round"/></svg>
<div class="abs" style="left:433.5px;top:1045.7px;width:1492px;height:1px;background:#e2e3e6"></div>
<div class="t" style="left:433.2px;top:1014.2px;width:327.2px;text-align:center;font-size:19.5px;font-weight:bold;color:#3d66c9;line-height:24px">HK-40080115-B</div>
<div class="t" style="left:760.4px;top:1014.2px;width:355px;text-align:center;font-size:19.1px;color:#1f2a3a;line-height:24px;-webkit-text-stroke:0.3px #1f2a3a"><span style="display:inline-block;width:11px;height:11px;border-radius:50%;background:#8db553;margin-right:9px;vertical-align:1px"></span>72.8%</div>
<div class="abs" style="left:1115.0px;top:1005.8px;width:97.4px;height:40.9px;background:#6aad5b"></div>
<svg class="abs" style="left:1156.7px;top:1018.25px" width="14.0" height="16.0" viewBox="0 0 14 16"><path d="M0.3 9.4 L1.7 8.0 L5.1 11.7 L12.4 0.1 L13.9 0.9 L6.2 14.9 L4.6 14.9 Z" fill="#fff" stroke="#fff" stroke-width="0.3" stroke-linejoin="round"/></svg>
<div class="abs" style="left:1211.4px;top:1005.8px;width:118.6px;height:40.9px;background:#6aad5b"></div>
<svg class="abs" style="left:1263.7px;top:1018.25px" width="14.0" height="16.0" viewBox="0 0 14 16"><path d="M0.3 9.4 L1.7 8.0 L5.1 11.7 L12.4 0.1 L13.9 0.9 L6.2 14.9 L4.6 14.9 Z" fill="#fff" stroke="#fff" stroke-width="0.3" stroke-linejoin="round"/></svg>
<div class="abs" style="left:1329.0px;top:1005.8px;width:120.0px;height:40.9px;background:#cd473c"></div>
<svg class="abs" style="left:1382.0px;top:1017.25px" width="14.0" height="18.0" viewBox="0 0 14 18"><path d="M3.05 2.5 L10.65 15.2 M12.55 1.4 C9 6.5 5 12 1.95 17.0" fill="none" stroke="#fff" stroke-width="2.3" stroke-linecap="round" stroke-linejoin="round"/></svg>
<div class="abs" style="left:1448.0px;top:1005.8px;width:103.8px;height:40.9px;background:#6aad5b"></div>
<svg class="abs" style="left:1492.9px;top:1018.25px" width="14.0" height="16.0" viewBox="0 0 14 16"><path d="M0.3 9.4 L1.7 8.0 L5.1 11.7 L12.4 0.1 L13.9 0.9 L6.2 14.9 L4.6 14.9 Z" fill="#fff" stroke="#fff" stroke-width="0.3" stroke-linejoin="round"/></svg>
<div class="abs" style="left:1550.8px;top:1005.8px;width:125.6px;height:40.9px;background:#6aad5b"></div>
<svg class="abs" style="left:1606.6px;top:1018.25px" width="14.0" height="16.0" viewBox="0 0 14 16"><path d="M0.3 9.4 L1.7 8.0 L5.1 11.7 L12.4 0.1 L13.9 0.9 L6.2 14.9 L4.6 14.9 Z" fill="#fff" stroke="#fff" stroke-width="0.3" stroke-linejoin="round"/></svg>
<div class="abs" style="left:1675.4px;top:1005.8px;width:126.3px;height:40.9px;background:#6aad5b"></div>
<svg class="abs" style="left:1731.5500000000002px;top:1018.25px" width="14.0" height="16.0" viewBox="0 0 14 16"><path d="M0.3 9.4 L1.7 8.0 L5.1 11.7 L12.4 0.1 L13.9 0.9 L6.2 14.9 L4.6 14.9 Z" fill="#fff" stroke="#fff" stroke-width="0.3" stroke-linejoin="round"/></svg>
<div class="abs" style="left:1800.7px;top:1005.8px;width:125.7px;height:40.9px;background:#98c35e"></div>
<svg class="abs" style="left:1851.5500000000002px;top:1018.25px" width="14.0" height="16.0" viewBox="0 0 14 16"><path d="M0.3 9.4 L1.7 8.0 L5.1 11.7 L12.4 0.1 L13.9 0.9 L6.2 14.9 L4.6 14.9 Z" fill="#fff" stroke="#fff" stroke-width="0.3" stroke-linejoin="round"/></svg>
<svg class="abs" style="left:1865.9px;top:1018.1px" width="9.4" height="9.4" viewBox="0 0 9.40 9.40"><path d="M4.70 1.00L4.70 8.40M1.50 2.85L7.90 6.55M7.90 2.85L1.50 6.55" stroke="#fff" stroke-width="1.6" stroke-linecap="round" fill="none"/></svg>
<div class="abs" style="left:433.5px;top:1085.7px;width:1492px;height:1px;background:#e2e3e6"></div>
<div class="t" style="left:433.2px;top:1054.2px;width:327.2px;text-align:center;font-size:19.5px;font-weight:bold;color:#3d66c9;line-height:24px">HK-40080115-A</div>
<div class="t" style="left:760.4px;top:1054.2px;width:355px;text-align:center;font-size:19.1px;color:#1f2a3a;line-height:24px;-webkit-text-stroke:0.3px #1f2a3a"><span style="display:inline-block;width:11px;height:11px;border-radius:50%;background:#d28d35;margin-right:9px;vertical-align:1px"></span>56.5%</div>
<div class="abs" style="left:1115.0px;top:1045.7px;width:97.4px;height:41.0px;background:#6aad5b"></div>
<svg class="abs" style="left:1156.7px;top:1058.2px" width="14.0" height="16.0" viewBox="0 0 14 16"><path d="M0.3 9.4 L1.7 8.0 L5.1 11.7 L12.4 0.1 L13.9 0.9 L6.2 14.9 L4.6 14.9 Z" fill="#fff" stroke="#fff" stroke-width="0.3" stroke-linejoin="round"/></svg>
<div class="abs" style="left:1211.4px;top:1045.7px;width:118.6px;height:41.0px;background:#6aad5b"></div>
<svg class="abs" style="left:1263.7px;top:1058.2px" width="14.0" height="16.0" viewBox="0 0 14 16"><path d="M0.3 9.4 L1.7 8.0 L5.1 11.7 L12.4 0.1 L13.9 0.9 L6.2 14.9 L4.6 14.9 Z" fill="#fff" stroke="#fff" stroke-width="0.3" stroke-linejoin="round"/></svg>
<div class="abs" style="left:1329.0px;top:1045.7px;width:120.0px;height:41.0px;background:#cd473c"></div>
<svg class="abs" style="left:1382.0px;top:1057.2px" width="14.0" height="18.0" viewBox="0 0 14 18"><path d="M3.05 2.5 L10.65 15.2 M12.55 1.4 C9 6.5 5 12 1.95 17.0" fill="none" stroke="#fff" stroke-width="2.3" stroke-linecap="round" stroke-linejoin="round"/></svg>
<div class="abs" style="left:1448.0px;top:1045.7px;width:103.8px;height:41.0px;background:#6aad5b"></div>
<svg class="abs" style="left:1492.9px;top:1058.2px" width="14.0" height="16.0" viewBox="0 0 14 16"><path d="M0.3 9.4 L1.7 8.0 L5.1 11.7 L12.4 0.1 L13.9 0.9 L6.2 14.9 L4.6 14.9 Z" fill="#fff" stroke="#fff" stroke-width="0.3" stroke-linejoin="round"/></svg>
<div class="abs" style="left:1550.8px;top:1045.7px;width:125.6px;height:41.0px;background:#6aad5b"></div>
<svg class="abs" style="left:1606.6px;top:1058.2px" width="14.0" height="16.0" viewBox="0 0 14 16"><path d="M0.3 9.4 L1.7 8.0 L5.1 11.7 L12.4 0.1 L13.9 0.9 L6.2 14.9 L4.6 14.9 Z" fill="#fff" stroke="#fff" stroke-width="0.3" stroke-linejoin="round"/></svg>
<div class="abs" style="left:1675.4px;top:1045.7px;width:126.3px;height:41.0px;background:#6aad5b"></div>
<svg class="abs" style="left:1731.5500000000002px;top:1058.2px" width="14.0" height="16.0" viewBox="0 0 14 16"><path d="M0.3 9.4 L1.7 8.0 L5.1 11.7 L12.4 0.1 L13.9 0.9 L6.2 14.9 L4.6 14.9 Z" fill="#fff" stroke="#fff" stroke-width="0.3" stroke-linejoin="round"/></svg>
<div class="abs" style="left:1800.7px;top:1045.7px;width:125.7px;height:41.0px;background:#cd473c"></div>
<svg class="abs" style="left:1856.5500000000002px;top:1057.2px" width="14.0" height="18.0" viewBox="0 0 14 18"><path d="M3.05 2.5 L10.65 15.2 M12.55 1.4 C9 6.5 5 12 1.95 17.0" fill="none" stroke="#fff" stroke-width="2.3" stroke-linecap="round" stroke-linejoin="round"/></svg>
<div class="abs" style="left:433.5px;top:1125.6px;width:1492px;height:1px;background:#e2e3e6"></div>
<div class="t" style="left:433.2px;top:1094.2px;width:327.2px;text-align:center;font-size:18.6px;color:#7b68a6;line-height:24px">CN-111108241-A</div>
<div class="t" style="left:760.4px;top:1094.2px;width:355px;text-align:center;font-size:19.1px;color:#1f2a3a;line-height:24px;-webkit-text-stroke:0.3px #1f2a3a"><span style="display:inline-block;width:11px;height:11px;border-radius:50%;background:#e8922f;margin-right:9px;vertical-align:1px"></span>47.8%</div>
<div class="abs" style="left:1115.0px;top:1085.7px;width:97.4px;height:40.9px;background:#6aad5b"></div>
<svg class="abs" style="left:1156.7px;top:1098.15px" width="14.0" height="16.0" viewBox="0 0 14 16"><path d="M0.3 9.4 L1.7 8.0 L5.1 11.7 L12.4 0.1 L13.9 0.9 L6.2 14.9 L4.6 14.9 Z" fill="#fff" stroke="#fff" stroke-width="0.3" stroke-linejoin="round"/></svg>
<div class="abs" style="left:1211.4px;top:1085.7px;width:118.6px;height:40.9px;background:#6aad5b"></div>
<svg class="abs" style="left:1263.7px;top:1098.15px" width="14.0" height="16.0" viewBox="0 0 14 16"><path d="M0.3 9.4 L1.7 8.0 L5.1 11.7 L12.4 0.1 L13.9 0.9 L6.2 14.9 L4.6 14.9 Z" fill="#fff" stroke="#fff" stroke-width="0.3" stroke-linejoin="round"/></svg>
<div class="abs" style="left:1329.0px;top:1085.7px;width:120.0px;height:40.9px;background:#e8912f"></div>
<svg class="abs" style="left:1377.0px;top:1098.15px" width="14.0" height="16.0" viewBox="0 0 14 16"><path d="M0.3 9.4 L1.7 8.0 L5.1 11.7 L12.4 0.1 L13.9 0.9 L6.2 14.9 L4.6 14.9 Z" fill="#fff" stroke="#fff" stroke-width="0.3" stroke-linejoin="round"/></svg>
<svg class="abs" style="left:1391.3px;top:1098.0px" width="9.4" height="9.4" viewBox="0 0 9.40 9.40"><path d="M4.70 1.00L4.70 8.40M1.50 2.85L7.90 6.55M7.90 2.85L1.50 6.55" stroke="#fff" stroke-width="1.6" stroke-linecap="round" fill="none"/></svg>
<div class="abs" style="left:1448.0px;top:1085.7px;width:103.8px;height:40.9px;background:#e8912f"></div>
<svg class="abs" style="left:1487.9px;top:1098.15px" width="14.0" height="16.0" viewBox="0 0 14 16"><path d="M0.3 9.4 L1.7 8.0 L5.1 11.7 L12.4 0.1 L13.9 0.9 L6.2 14.9 L4.6 14.9 Z" fill="#fff" stroke="#fff" stroke-width="0.3" stroke-linejoin="round"/></svg>
<svg class="abs" style="left:1502.2px;top:1098.0px" width="9.4" height="9.4" viewBox="0 0 9.40 9.40"><path d="M4.70 1.00L4.70 8.40M1.50 2.85L7.90 6.55M7.90 2.85L1.50 6.55" stroke="#fff" stroke-width="1.6" stroke-linecap="round" fill="none"/></svg>
<div class="abs" style="left:1550.8px;top:1085.7px;width:125.6px;height:40.9px;background:#6aad5b"></div>
<svg class="abs" style="left:1606.6px;top:1098.15px" width="14.0" height="16.0" viewBox="0 0 14 16"><path d="M0.3 9.4 L1.7 8.0 L5.1 11.7 L12.4 0.1 L13.9 0.9 L6.2 14.9 L4.6 14.9 Z" fill="#fff" stroke="#fff" stroke-width="0.3" stroke-linejoin="round"/></svg>
<div class="abs" style="left:1675.4px;top:1085.7px;width:126.3px;height:40.9px;background:#cd473c"></div>
<svg class="abs" style="left:1731.5500000000002px;top:1097.15px" width="14.0" height="18.0" viewBox="0 0 14 18"><path d="M3.05 2.5 L10.65 15.2 M12.55 1.4 C9 6.5 5 12 1.95 17.0" fill="none" stroke="#fff" stroke-width="2.3" stroke-linecap="round" stroke-linejoin="round"/></svg>
<div class="abs" style="left:1800.7px;top:1085.7px;width:125.7px;height:40.9px;background:#cd473c"></div>
<svg class="abs" style="left:1856.5500000000002px;top:1097.15px" width="14.0" height="18.0" viewBox="0 0 14 18"><path d="M3.05 2.5 L10.65 15.2 M12.55 1.4 C9 6.5 5 12 1.95 17.0" fill="none" stroke="#fff" stroke-width="2.3" stroke-linecap="round" stroke-linejoin="round"/></svg>
<div class="abs" style="left:433.5px;top:1165.6px;width:1492px;height:1px;background:#e2e3e6"></div>
<div class="t" style="left:433.2px;top:1134.1px;width:327.2px;text-align:center;font-size:19.5px;font-weight:bold;color:#3d66c9;line-height:24px">JP-5983202-B2</div>
<div class="t" style="left:760.4px;top:1134.1px;width:355px;text-align:center;font-size:19.1px;color:#1f2a3a;line-height:24px;-webkit-text-stroke:0.3px #1f2a3a"><span style="display:inline-block;width:11px;height:11px;border-radius:50%;background:#d06f2e;margin-right:9px;vertical-align:1px"></span>32.6%</div>
<div class="abs" style="left:1115.0px;top:1125.6px;width:97.4px;height:41.0px;background:#e8912f"></div>
<svg class="abs" style="left:1151.7px;top:1138.1px" width="14.0" height="16.0" viewBox="0 0 14 16"><path d="M0.3 9.4 L1.7 8.0 L5.1 11.7 L12.4 0.1 L13.9 0.9 L6.2 14.9 L4.6 14.9 Z" fill="#fff" stroke="#fff" stroke-width="0.3" stroke-linejoin="round"/></svg>
<svg class="abs" style="left:1166.0px;top:1138.0px" width="9.4" height="9.4" viewBox="0 0 9.40 9.40"><path d="M4.70 1.00L4.70 8.40M1.50 2.85L7.90 6.55M7.90 2.85L1.50 6.55" stroke="#fff" stroke-width="1.6" stroke-linecap="round" fill="none"/></svg>
<div class="abs" style="left:1211.4px;top:1125.6px;width:118.6px;height:41.0px;background:#6aad5b"></div>
<svg class="abs" style="left:1263.7px;top:1138.1px" width="14.0" height="16.0" viewBox="0 0 14 16"><path d="M0.3 9.4 L1.7 8.0 L5.1 11.7 L12.4 0.1 L13.9 0.9 L6.2 14.9 L4.6 14.9 Z" fill="#fff" stroke="#fff" stroke-width="0.3" stroke-linejoin="round"/></svg>
<div class="abs" style="left:1329.0px;top:1125.6px;width:120.0px;height:41.0px;background:#cd473c"></div>
<svg class="abs" style="left:1382.0px;top:1137.1px" width="14.0" height="18.0" viewBox="0 0 14 18"><path d="M3.05 2.5 L10.65 15.2 M12.55 1.4 C9 6.5 5 12 1.95 17.0" fill="none" stroke="#fff" stroke-width="2.3" stroke-linecap="round" stroke-linejoin="round"/></svg>
<div class="abs" style="left:1448.0px;top:1125.6px;width:103.8px;height:41.0px;background:#6aad5b"></div>
<svg class="abs" style="left:1492.9px;top:1138.1px" width="14.0" height="16.0" viewBox="0 0 14 16"><path d="M0.3 9.4 L1.7 8.0 L5.1 11.7 L12.4 0.1 L13.9 0.9 L6.2 14.9 L4.6 14.9 Z" fill="#fff" stroke="#fff" stroke-width="0.3" stroke-linejoin="round"/></svg>
<div class="abs" style="left:1550.8px;top:1125.6px;width:125.6px;height:41.0px;background:#cd473c"></div>
<svg class="abs" style="left:1606.6px;top:1137.1px" width="14.0" height="18.0" viewBox="0 0 14 18"><path d="M3.05 2.5 L10.65 15.2 M12.55 1.4 C9 6.5 5 12 1.95 17.0" fill="none" stroke="#fff" stroke-width="2.3" stroke-linecap="round" stroke-linejoin="round"/></svg>
<div class="abs" style="left:1675.4px;top:1125.6px;width:126.3px;height:41.0px;background:#cd473c"></div>
<svg class="abs" style="left:1731.5500000000002px;top:1137.1px" width="14.0" height="18.0" viewBox="0 0 14 18"><path d="M3.05 2.5 L10.65 15.2 M12.55 1.4 C9 6.5 5 12 1.95 17.0" fill="none" stroke="#fff" stroke-width="2.3" stroke-linecap="round" stroke-linejoin="round"/></svg>
<div class="abs" style="left:1800.7px;top:1125.6px;width:125.7px;height:41.0px;background:#cd473c"></div>
<svg class="abs" style="left:1856.5500000000002px;top:1137.1px" width="14.0" height="18.0" viewBox="0 0 14 18"><path d="M3.05 2.5 L10.65 15.2 M12.55 1.4 C9 6.5 5 12 1.95 17.0" fill="none" stroke="#fff" stroke-width="2.3" stroke-linecap="round" stroke-linejoin="round"/></svg>
<div class="abs" style="left:1211.4px;top:766.3px;width:1px;height:399.8px;background:rgba(0,0,0,0.09)"></div>
<div class="abs" style="left:1329.0px;top:766.3px;width:1px;height:399.8px;background:rgba(0,0,0,0.09)"></div>
<div class="abs" style="left:1448.0px;top:766.3px;width:1px;height:399.8px;background:rgba(0,0,0,0.09)"></div>
<div class="abs" style="left:1550.8px;top:766.3px;width:1px;height:399.8px;background:rgba(0,0,0,0.09)"></div>
<div class="abs" style="left:1675.4px;top:766.3px;width:1px;height:399.8px;background:rgba(0,0,0,0.09)"></div>
<div class="abs" style="left:1800.7px;top:766.3px;width:1px;height:399.8px;background:rgba(0,0,0,0.09)"></div>
<div class="abs" style="left:1115.5px;top:805.8px;width:810.4px;height:1px;background:rgba(0,0,0,0.09)"></div>
<div class="abs" style="left:1115.5px;top:845.8px;width:810.4px;height:1px;background:rgba(0,0,0,0.09)"></div>
<div class="abs" style="left:1115.5px;top:885.8px;width:810.4px;height:1px;background:rgba(0,0,0,0.09)"></div>
<div class="abs" style="left:1115.5px;top:925.8px;width:810.4px;height:1px;background:rgba(0,0,0,0.09)"></div>
<div class="abs" style="left:1115.5px;top:965.8px;width:810.4px;height:1px;background:rgba(0,0,0,0.09)"></div>
<div class="abs" style="left:1115.5px;top:1005.8px;width:810.4px;height:1px;background:rgba(0,0,0,0.09)"></div>
<div class="abs" style="left:1115.5px;top:1045.7px;width:810.4px;height:1px;background:rgba(0,0,0,0.09)"></div>
<div class="abs" style="left:1115.5px;top:1085.7px;width:810.4px;height:1px;background:rgba(0,0,0,0.09)"></div>
<div class="abs" style="left:1115.5px;top:1125.6px;width:810.4px;height:1px;background:rgba(0,0,0,0.09)"></div>
</div></div>
</body></html>
